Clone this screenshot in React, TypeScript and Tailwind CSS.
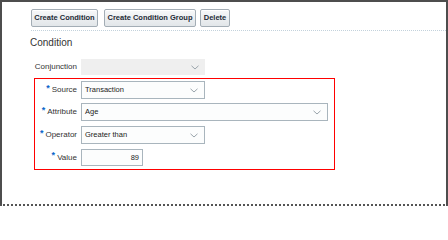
const font = { fontFamily: '"Liberation Sans", Arial, sans-serif' }

function Chevron() {
  return (
    <svg width="8" height="5" viewBox="0 0 8 5" className="shrink-0">
      <polyline points="0.5,0.8 4,4 7.5,0.8" fill="none" stroke="#9aa4ab" strokeWidth="1" />
    </svg>
  )
}

function ToolButton({ label, width }: { label: string; width: string }) {
  return (
    <button
      className={`${width} h-[18px] flex items-center justify-center rounded-[2px] border border-[#a3adb5] bg-gradient-to-b from-[#f7f8f9] to-[#e2e6e9] text-[7.5px] font-bold text-[#1d2a36] shadow-[inset_0_1px_0_#ffffff]`}
    >
      {label}
    </button>
  )
}

function Req() {
  return <span className="text-[9px] font-bold text-[#0b66c9] leading-none relative -top-[2px] mr-[2px]">*</span>
}

function Row({ label, required = true, children, className = '' }: { label: string; required?: boolean; children: React.ReactNode; className?: string }) {
  return (
    <div className={`flex items-center ${className}`}>
      <div className="w-[42px] flex items-center justify-end text-[8px] text-[#333] whitespace-nowrap">
        {required && <Req />}
        {label}
      </div>
      <div className="ml-[4px]">{children}</div>
    </div>
  )
}

function SelectBox({ value, width }: { value: string; width: string }) {
  return (
    <div className={`${width} h-[18px] flex items-center justify-between border border-[#a9b5bd] bg-[#fcfdfd] pl-[3px] pr-[6px] text-[7.5px] text-[#222]`}>
      <span>{value}</span>
      <Chevron />
    </div>
  )
}

export default function App() {
  return (
    <div style={font} className="w-[448px] h-[206px] bg-white">
      <div className="w-[448px] h-[206px] border-t-2 border-x-2 border-b-2 border-[#4d4d4d] [border-bottom-style:dotted] [border-bottom-color:#555555] pl-[28px] pt-[7px]">
        {/* toolbar */}
        <div className="flex items-center pl-[1px]">
          <ToolButton label="Create Condition" width="w-[67px]" />
          <div className="ml-[6px]">
            <ToolButton label="Create Condition Group" width="w-[92px]" />
          </div>
          <div className="ml-[4px]">
            <ToolButton label="Delete" width="w-[30px]" />
          </div>
        </div>
        <div className="mt-[3px] ml-[1px] border-t border-dotted border-[#c3d2dc]" />

        <div className="mt-[6px] text-[10px] leading-[12px] text-[#333]">Condition</div>

        <div className="mt-[10px] ml-[4px]">
          {/* conjunction */}
          <div className="flex items-center h-[16px]">
            <div className="w-[43px] text-right text-[8px] text-[#333]">Conjunction</div>
            <div className="ml-[4px] w-[124px] h-[16px] bg-[#efefef] flex items-center justify-end pr-[6px]">
              <Chevron />
            </div>
          </div>

          {/* highlighted group */}
          <div className="mt-[3px] w-[301px] border border-[#ff0000] pt-[2px] pb-[3px]">
            <Row label="Source">
              <SelectBox value="Transaction" width="w-[124px]" />
            </Row>
            <Row label="Attribute" className="mt-[4px]">
              <SelectBox value="Age" width="w-[247px]" />
            </Row>
            <Row label="Operator" className="mt-[5px]">
              <SelectBox value="Greater than" width="w-[124px]" />
            </Row>
            <Row label="Value" className="mt-[5px]">
              <div className="w-[62px] h-[17px] flex items-center justify-end border border-[#a9b5bd] bg-[#fcfdfd] pr-[3px] text-[7.5px] text-[#222]">
                89
              </div>
            </Row>
          </div>
        </div>
      </div>
    </div>
  )
}
